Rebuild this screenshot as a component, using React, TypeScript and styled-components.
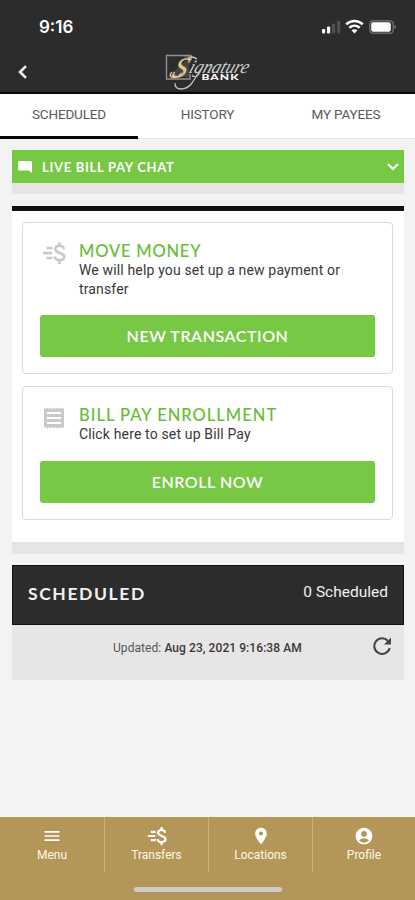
import React from 'react';
import styled, { createGlobalStyle } from 'styled-components';
import { MdMenu, MdPlace, MdAccountCircle } from 'react-icons/md';

const Global = createGlobalStyle`
  * { box-sizing: border-box; }
  body { margin: 0; background: #f3f3f3; font-family: Roboto, "Liberation Sans", sans-serif; }
  button { font: inherit; border: 0; padding: 0; background: none; color: inherit; }
  svg { display: block; flex: none; overflow: visible; }
`;

const Screen = styled.div`
  width: 415px;
  height: 900px;
  display: flex;
  flex-direction: column;
  background: #f3f3f3;
  overflow: hidden;
`;
const Header = styled.header`
  height: 94px;
  background: #2c2c2c;
  border-bottom: 2px solid #080808;
  color: #fff;
`;
const StatusBar = styled.div`
  height: 50px;
  padding: 4px 18px 0 39px;
  display: flex;
  align-items: center;
  justify-content: space-between;
  font: 600 17px Inter, sans-serif;
`;
const TitleBar = styled.div`
  height: 42px;
  display: grid;
  grid-template-columns: 165px 86px 1fr;
  align-items: start;
`;
const Back = styled.button`
  height: 42px;
  padding: 1px 0 0 17px;
  display: flex;
  align-items: center;
`;
const Tabs = styled.nav`
  height: 45px;
  flex: none;
  display: grid;
  grid-template-columns: 138px 139px 138px;
  background: #fff;
`;
const Tab = styled.button<{ $active?: boolean }>`
  padding: 0 0 ${p => (p.$active ? 3 : 5)}px;
  font-size: 13.5px;
  letter-spacing: -.15px;
  color: #5a5a5a;
  border-bottom: ${p => (p.$active ? '3px solid #080808' : '1px solid #e6e6e6')};
`;
const Content = styled.main`
  flex: 1;
  padding: 11px 11px 0 12px;
`;
const ChatBar = styled.div`
  height: 33px;
  padding: 0 5px 0 6px;
  display: flex;
  align-items: center;
  background: #77c844;
  color: #fff;
`;
const Heading = styled.span<{ $size: number; $weight: number; $spacing: number; $color: string }>`
  font-family: Lato, sans-serif;
  font-size: ${p => p.$size}px;
  font-weight: ${p => p.$weight};
  letter-spacing: ${p => p.$spacing}px;
  line-height: 20px;
  color: ${p => p.$color};
  white-space: nowrap;
`;
const ChatLabel = styled.div`
  flex: 1;
  display: flex;
  padding-left: 10px;
`;
const Strip = styled.div<{ $height: number; $gap: number }>`
  height: ${p => p.$height}px;
  margin-bottom: ${p => p.$gap}px;
  background: #e6e5e5;
`;
const Panel = styled.section`
  height: 336px;
  border-top: 5px solid #111;
  background: #fff;
  padding: 11px 11px 0 10px;
  display: flex;
  flex-direction: column;
  gap: 12px;
`;
const Card = styled.article<{ $height: number }>`
  height: ${p => p.$height}px;
  padding: 18px 17px 16px;
  border: 1.5px solid #d9d9d9;
  border-radius: 4px;
  display: flex;
  flex-direction: column;
  justify-content: space-between;
`;
const CardTop = styled.div`
  display: grid;
  grid-template-columns: 39px 1fr;
`;
const IconCell = styled.div<{ $left: number }>`
  padding-left: ${p => p.$left}px;
  color: #c9c9c9;
`;
const Copy = styled.div`
  display: flex;
  flex-direction: column;
`;
const Text = styled.p`
  margin: 0;
  font-size: 14px;
  line-height: 19px;
  letter-spacing: .15px;
  color: #383838;
`;
const Action = styled.button`
  height: 42px;
  flex: none;
  border-radius: 3px;
  background: #77c844;
`;
const ScheduleHead = styled.div`
  height: 60px;
  padding: 0 15px;
  display: flex;
  align-items: center;
  justify-content: space-between;
  background: #2c2c2c;
  border: 1px solid #111;
`;
const ScheduleTitle = styled.div`
  padding-bottom: 2px;
`;
const Count = styled.span`
  font-size: 15.5px;
  color: #f1f1f1;
  padding-bottom: 6px;
`;
const ScheduleFoot = styled.div`
  height: 55px;
  padding: 10px 10px 0 101px;
  display: flex;
  justify-content: space-between;
  background: #e7e5e6;
`;
const Updated = styled.span`
  font-size: 12px;
  line-height: 26px;
  letter-spacing: .07px;
  color: #555;
  b { font-weight: 500; color: #383838; }
`;
const BottomBar = styled.footer`
  height: 83px;
  background: #b39658;
  color: #fff;
`;
const BottomNav = styled.nav`
  height: 55px;
  display: grid;
  grid-template-columns: 105px 104px 104px 102px;
`;
const NavItem = styled.button`
  display: flex;
  flex-direction: column;
  align-items: center;
  padding-top: 9px;
  font-size: 12px;
  line-height: 14px;
  letter-spacing: 0;
  color: #fff8e8;
  border-right: 1px solid #cbb27b;
  &:last-child { border: 0; }
  svg { margin-bottom: 2px; color: #fff; }
`;
const HomeIndicator = styled.div`
  width: 148px;
  height: 5px;
  margin: 15px 0 0 134px;
  border-radius: 3px;
  background: #cfccc8;
`;

const TransferIcon = ({ size }: { size: number }) => (
  <svg width={size} height={size} viewBox="0 0 24 24" fill="none" stroke="currentColor" strokeWidth="2.6">
    <path d="M4.5 7h6M1 12h9M4.5 17h6M17.5 1.2v4M17.5 19v4" />
    <path d="M21.8 8.2c0-2-1.7-3.4-4.3-3.4s-4.2 1.4-4.2 3.4c0 4.6 8.9 2.8 8.9 7.4 0 2.3-2 3.6-4.6 3.6s-4.8-1.4-4.8-3.7" />
  </svg>
);

const ReceiptIcon = () => (
  <svg width="20" height="24" viewBox="0 -2 20 24">
    <path d="M0 1l1.7 1L3.3.5 5 2 6.7.5 8.3 2 10 .5 11.7 2 13.3.5 15 2 16.7.5 18.3 2 20 1v20l-1.7-1-1.6 1.5L15 20l-1.7 1.5-1.6-1.5-1.7 1.5L8.3 20l-1.6 1.5L5 20l-1.7 1.5L1.7 20 0 21z" fill="currentColor" />
    <path d="M3 6h14M3 11h14M3 16h14" stroke="#fff" strokeWidth="2.2" />
  </svg>
);

const RefreshIcon = () => (
  <svg width="18" height="18" viewBox="0 0 18 18" fill="none" stroke="#444" strokeWidth="2">
    <path d="M15 4A7.8 7.8 0 1 0 16.7 11" />
    <path d="M18 .5v7h-7z" fill="#444" stroke="none" />
  </svg>
);

const RefreshButton = styled.button`
  height: 24px;
  padding: 2px 3px 0 0;
  display: flex;
`;

const ChatIcon = () => (
  <svg width="14" height="12" viewBox="0 0 14 12" fill="#fff">
    <path d="M1.5 0h11Q14 0 14 1.5V12l-3-2.5H1.5Q0 9.5 0 8V1.5Q0 0 1.5 0z" />
  </svg>
);

const StatusIcons = () => (
  <svg width="78" height="18" viewBox="319 18 78 18">
    <g fill="#fff">
      <rect x="322" y="29" width="3.2" height="4.5" rx="1" />
      <rect x="327" y="26.5" width="3.2" height="7" rx="1" />
      <g fill="#505050">
        <rect x="332" y="23.5" width="3.2" height="10" rx="1" />
        <rect x="337" y="21" width="3.2" height="12.5" rx="1" />
      </g>
    </g>
    <g fill="none" stroke="#fff" strokeWidth="2.5">
      <path d="M346.2 24.2c5-4.4 11.6-4.4 16.6 0" />
      <path d="M349.3 27.8c3.1-2.7 7.3-2.7 10.4 0" />
    </g>
    <path d="M351.5 30.3q3-2.3 6 0l-3 3.2z" fill="#fff" />
    <rect x="369.8" y="20.8" width="23.4" height="12.4" rx="3.5" fill="none" stroke="#777" strokeWidth="1.2" />
    <rect x="371.2" y="22.3" width="19.6" height="9.4" rx="2" fill="#fff" />
    <path d="M394.5 24.8c2 .8 2 3.6 0 4.4z" fill="#777" />
  </svg>
);

const Logo = () => (
  <svg width="86" height="42" viewBox="165 50 86 42">
    <path d="M191 60v-4.5h-24.5V79H190v-5" fill="none" stroke="#8f8f8f" strokeWidth="1.4" />
    <path d="M168 77l11-10 10-9v19z" fill="#444" />
    <text x="184" y="58" fontSize="4" fill="#aaa" fontFamily="Liberation Serif">The</text>
    <g fontFamily="Liberation Serif" fontStyle="italic">
      <text transform="translate(171 77) skewX(-20)" fontSize="28" fill="#dfc793" stroke="#dfc793" strokeWidth=".3">S</text>
      <text transform="translate(188 72.8) skewX(-20)" fontSize="19" fill="#d4d4d4" textLength="59" lengthAdjust="spacingAndGlyphs">ignature</text>
    </g>
    <path d="M172 72c-6 6 4 8 10 1M188 59q3-4 9 0" fill="none" stroke="#dfc793" strokeWidth="1.3" />
    <path d="M175 83c-1 8 11 8 17 0l9-14" fill="none" stroke="#c4c4c4" strokeWidth="1.3" />
    <text transform="translate(201.5 79.8) scale(1.5 1)" fontFamily="Lato" fontWeight="900" fontSize="8" letterSpacing=".7" fill="#fff">BANK</text>
  </svg>
);

export default function App() {
  return (
    <>
      <Global />
      <Screen>
        <Header>
          <StatusBar><span>9:16</span><StatusIcons /></StatusBar>
          <TitleBar>
            <Back aria-label="Back">
              <svg width="12" height="14" viewBox="0 0 12 14" fill="none" stroke="#fff" strokeWidth="2.5"><path d="M9 1.2L3 7l6 5.8" /></svg>
            </Back>
            <Logo />
          </TitleBar>
        </Header>
        <Tabs>
          <Tab $active>SCHEDULED</Tab>
          <Tab>HISTORY</Tab>
          <Tab>MY PAYEES</Tab>
        </Tabs>
        <Content>
          <ChatBar>
            <ChatIcon />
            <ChatLabel><Heading $size={13} $weight={700} $spacing={0.7} $color="#fff">LIVE BILL PAY CHAT</Heading></ChatLabel>
            <svg width="12" height="8" viewBox="0 0 12 8" fill="none" stroke="#fff" strokeWidth="2"><path d="M1 1l5 5 5-5" /></svg>
          </ChatBar>
          <Strip $height={11} $gap={12} />
          <Panel>
            <Card $height={152}>
              <CardTop>
                <IconCell $left={2}><TransferIcon size={24} /></IconCell>
                <Copy>
                  <Heading $size={16.5} $weight={500} $spacing={0.8} $color="#65bd35">MOVE MONEY</Heading>
                  <Text>We will help you set up a new payment or<br />transfer</Text>
                </Copy>
              </CardTop>
              <Action><Heading $size={16} $weight={600} $spacing={0.55} $color="#fff">NEW TRANSACTION</Heading></Action>
            </Card>
            <Card $height={134}>
              <CardTop>
                <IconCell $left={4}><ReceiptIcon /></IconCell>
                <Copy>
                  <Heading $size={16.5} $weight={500} $spacing={1} $color="#65bd35">BILL PAY ENROLLMENT</Heading>
                  <Text>Click here to set up Bill Pay</Text>
                </Copy>
              </CardTop>
              <Action><Heading $size={16} $weight={600} $spacing={0.55} $color="#fff">ENROLL NOW</Heading></Action>
            </Card>
          </Panel>
          <Strip $height={12} $gap={11} />
          <ScheduleHead>
            <ScheduleTitle><Heading $size={17.5} $weight={700} $spacing={1.6} $color="#f1f1f1">SCHEDULED</Heading></ScheduleTitle>
            <Count>0 Scheduled</Count>
          </ScheduleHead>
          <ScheduleFoot>
            <Updated>Updated: <b>Aug 23, 2021 9:16:38 AM</b></Updated>
            <RefreshButton aria-label="Refresh"><RefreshIcon /></RefreshButton>
          </ScheduleFoot>
        </Content>
        <BottomBar>
          <BottomNav>
            <NavItem><MdMenu size={20} />Menu</NavItem>
            <NavItem><TransferIcon size={20} />Transfers</NavItem>
            <NavItem><MdPlace size={20} />Locations</NavItem>
            <NavItem><MdAccountCircle size={20} />Profile</NavItem>
          </BottomNav>
          <HomeIndicator />
        </BottomBar>
      </Screen>
    </>
  );
}
